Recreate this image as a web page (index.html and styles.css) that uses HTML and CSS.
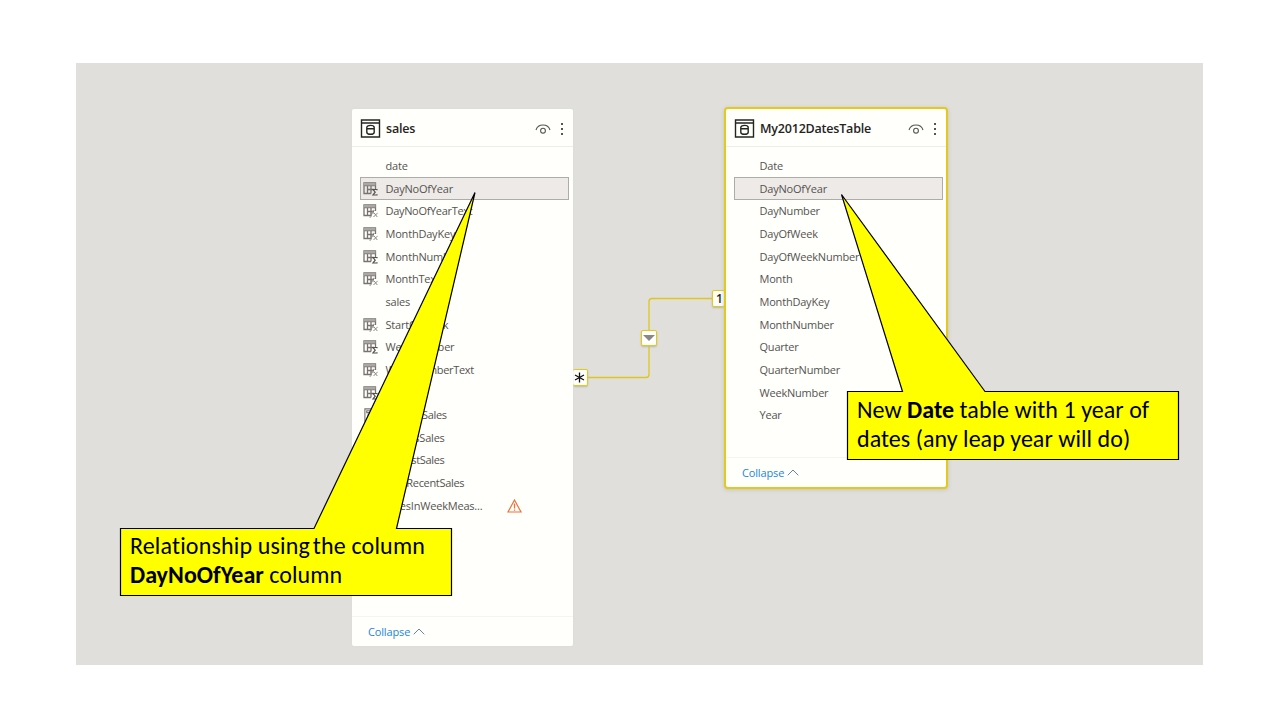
FILE: index.html
```
<!DOCTYPE html>
<html lang="en">
<head>
<meta charset="utf-8">
<title>Model view</title>
<link rel="stylesheet" href="styles.css">
</head>
<body>
<svg class="defs" width="0" height="0" aria-hidden="true">
  <symbol id="table" viewBox="0 0 20 19">
    <path d="M1 1h18v17H1zM1 4h18" fill="none" stroke="#252423" stroke-width="1.4"/>
    <path d="M6.300 8.500v4.700c0 2.800 7.400 2.800 7.400 0V8.500c0-2.800-7.400-2.800-7.400 0zM6.500 9.800h7" fill="none" stroke="#252423" stroke-width="1.400"/>
  </symbol>
  <symbol id="eye" viewBox="0 0 16 10">
    <path d="M1 6C3 -.7 13 -.7 15 6" fill="none" stroke="#555" stroke-width="1.100"/>
    <circle cx="8" cy="6.700" r="2.400" fill="none" stroke="#555" stroke-width="1.100"/>
  </symbol>
  <symbol id="grid" viewBox="0 0 15 14">
    <path d="M8 11.500H1V1h11.500v6M1 3.500h11.500M4.500 3.500v8M8 3.500v8M4.500 7.500H11" fill="none" stroke="#77736f" stroke-width="1.300"/>
    <path d="M1 1h11.500v2.500H1z" fill="#aaa7a4"/>
  </symbol>
  <symbol id="sum" viewBox="0 0 15 14">
    <use href="#grid" width="15" height="14"/>
    <path d="M14 8.300v-.8H10l2.200 2.700L10 13h4v-.8" fill="none" stroke="#55514e" stroke-width="1.200"/>
  </symbol>
  <symbol id="fx" viewBox="0 0 15 14">
    <use href="#grid" width="15" height="14"/>
    <path d="M11.500 6.500c-2-.7-2.300 1-2.800 3.700s-.8 3.300-2.200 3M7.500 9h3.500M11 8.800l3.300 4.200M14.700 8.800L10.500 13" fill="none" stroke="#8b8784"/>
  </symbol>
  <symbol id="calc" viewBox="0 0 15 15">
    <path d="M1.500 1h11v13h-11zM3.500 3h7v2h-7zM4 7.500h2m2 0h2M4 10h2m2 0h2M4 12h2" fill="none" stroke="#77736f" stroke-width="1.200"/>
  </symbol>
</svg>
<main class="canvas">
  <svg class="links" width="150" height="90" viewBox="573 293 150 90">
    <path d="M573 377.500h73q3 0 3-3v-73q0-3 3-3h73" fill="none" stroke="#dfc51f" stroke-width="1.300"/>
  </svg>
  <span class="end many"><svg width="11" height="11" viewBox="0 0 11 11"><path d="M5.500 .5v10M1 3l9 5M10 3L1 8" stroke="#111" stroke-width="1.300"/></svg></span>
  <span class="end filter"><svg width="12" height="6" viewBox="0 0 12 6"><path d="M0 0h12L6 6z" fill="#8a8886"/></svg></span>
  <span class="end one">1</span>

  <section class="entity sales">
    <header class="head"><svg class="ticon"><use href="#table"/></svg><h2 class="title">sales</h2><svg class="eye"><use href="#eye"/></svg><span class="dots"><i></i><i></i><i></i></span></header>
    <ul class="fields">
      <li class="field"><span class="slot"></span>date</li>
      <li class="field picked"><svg class="slot"><use href="#sum"/></svg>DayNoOfYear</li>
      <li class="field"><svg class="slot"><use href="#fx"/></svg><span class="tight">DayNoOfYearText</span></li>
      <li class="field"><svg class="slot"><use href="#fx"/></svg>MonthDayKey</li>
      <li class="field"><svg class="slot"><use href="#sum"/></svg>MonthNumber</li>
      <li class="field"><svg class="slot"><use href="#fx"/></svg>MonthText</li>
      <li class="field"><span class="slot"></span>sales</li>
      <li class="field"><svg class="slot"><use href="#fx"/></svg>StartOfWeek</li>
      <li class="field"><svg class="slot"><use href="#sum"/></svg>WeekNumber</li>
      <li class="field"><svg class="slot"><use href="#fx"/></svg><span class="tight">WeekNumberText</span></li>
      <li class="field"><svg class="slot"><use href="#sum"/></svg>Year</li>
      <li class="field"><svg class="slot"><use href="#calc"/></svg><span class="tight">MedianSales</span></li>
      <li class="field"><svg class="slot"><use href="#calc"/></svg>HighesSales</li>
      <li class="field"><svg class="slot"><use href="#calc"/></svg><span class="tight">LowestSales</span></li>
      <li class="field"><svg class="slot"><use href="#calc"/></svg><span class="tight">MaxRecentSales</span></li>
      <li class="field"><svg class="slot"><use href="#calc"/></svg>SalesInWeekMeas...<svg class="warn" viewBox="0 0 15 14"><path d="M7.500 1L14 13H1z" fill="none" stroke="#f0703a" stroke-width="1.200"/><path d="M7.500 4.500v5m0 1v1.300" stroke="#f0703a" stroke-width="1.300"/></svg></li>
    </ul>
    <footer class="foot">Collapse<svg class="chev" viewBox="0 0 12 7"><path d="M.7 6.300L6 1l5.300 5.300" fill="none" stroke="#6c7fae"/></svg></footer>
  </section>

  <section class="entity dates">
    <header class="head"><svg class="ticon"><use href="#table"/></svg><h2 class="title">My2012DatesTable</h2><svg class="eye"><use href="#eye"/></svg><span class="dots"><i></i><i></i><i></i></span></header>
    <ul class="fields">
      <li class="field"><span class="slot"></span>Date</li>
      <li class="field picked"><span class="slot"></span>DayNoOfYear</li>
      <li class="field"><span class="slot"></span>DayNumber</li>
      <li class="field"><span class="slot"></span>DayOfWeek</li>
      <li class="field"><span class="slot"></span>DayOfWeekNumber</li>
      <li class="field"><span class="slot"></span>Month</li>
      <li class="field"><span class="slot"></span>MonthDayKey</li>
      <li class="field"><span class="slot"></span>MonthNumber</li>
      <li class="field"><span class="slot"></span>Quarter</li>
      <li class="field"><span class="slot"></span>QuarterNumber</li>
      <li class="field"><span class="slot"></span>WeekNumber</li>
      <li class="field"><span class="slot"></span>Year</li>
    </ul>
    <footer class="foot">Collapse<svg class="chev" viewBox="0 0 12 7"><path d="M.7 6.300L6 1l5.300 5.300" fill="none" stroke="#6c7fae"/></svg></footer>
  </section>
</main>

<svg class="bubbles" width="1280" height="720" viewBox="0 0 1280 720">
  <path d="M120.500 528.500H314L475 192.500L396.500 528.500H451.500V595.500H120.500z"/>
  <path d="M847.500 391.500H902.500L841.500 194.500L985 391.500H1178.500V459.500H847.500z"/>
</svg>
<p class="note note-link"><span class="wide">Relationship using<span class="thin"> </span>the column</span><br><b>DayNoOfYear</b> column</p>
<p class="note note-date">New <b>Date</b> table with 1 year of<br>dates (any leap year will do)</p>
</body>
</html>
```
FILE: styles.css
```
* { box-sizing: border-box; }
body { margin: 0; width: 1280px; height: 720px; overflow: hidden; background: #fff; padding: 63px 77px 55px 76px; }
.defs, .links, .bubbles { position: absolute; }
.canvas { height: 602px; background: #e0dfdb; font: 11px/22px "Open Sans", "Noto Sans", sans-serif; color: #55534f; }
.links { left: 573px; top: 293px; }
.entity { position: absolute; display: flex; flex-direction: column; background: #fffffc; border-radius: 2px; }
.sales { left: 352px; top: 109px; width: 221px; height: 537px; box-shadow: 0 0 2px #d8d7d3; }
.dates { left: 724px; top: 107px; width: 224px; height: 382px; border: 2px solid #e2c920; border-radius: 4px; box-shadow: 0 1px 4px #c5c4bd; }
.head { display: flex; align-items: center; height: 38px; padding: 2px 8px 0 8px; border-bottom: 1px solid #eeedeb; flex: none; }
.ticon { width: 21px; height: 19px; }
.title { margin: 0 auto 0 5px; font-size: 12.5px; font-weight: 600; color: #252423; letter-spacing: -.2px; }
.eye { width: 16px; height: 10px; margin-right: 10px; }
.dots { display: flex; flex-direction: column; gap: 3px; width: 2px; margin-right: 2px; }
.dots i { width: 2px; height: 2px; background: #555; }
.fields { list-style: none; margin: 0; padding: 7.800px 4px 0 8px; flex: 1; }
.field { display: flex; align-items: center; height: 22.65px; padding-left: 3px; letter-spacing: -.2px; white-space: nowrap; }
.tight { letter-spacing: -.32px; }
.picked { background: #edeae8; box-shadow: inset 0 0 0 1px #aeaba8; }
.dates .fields { padding-right: 3px; }
.slot { width: 15px; height: 14px; margin-right: 7.500px; flex: none; }
.warn { width: 15px; height: 14px; margin-left: 25px; }
.foot { display: flex; align-items: center; gap: 3px; height: 30px; padding-left: 16px; border-top: 1px solid #f4f4f1; color: #1c86dc; letter-spacing: -.15px; }
.chev { width: 12px; height: 7px; }
.end { position: absolute; display: flex; align-items: center; justify-content: center; width: 17px; height: 17px; background: #fffffc; border: 1.500px solid #e2c920; border-radius: 2px; box-shadow: 0 1px 2px #bbb8a8; color: #222; font-weight: 600; font-size: 12px; }
.many { left: 573px; top: 369px; width: 15px; border-left: 0; padding-right: 1px; }
.filter { left: 641px; top: 330px; width: 16px; height: 16px; }
.one { left: 712px; top: 290px; width: 13px; padding-left: 2px; }
.bubbles { left: 0; top: 0; fill: #ff0; stroke: #000; stroke-width: 1.200; }
.note { position: absolute; margin: 0; font: 24px/29px Carlito, Lato, sans-serif; font-variant-ligatures: none; color: #000; white-space: nowrap; letter-spacing: .04px; }
.note-link { left: 130px; top: 531px; }
.note-date { left: 857px; top: 395px; }
.wide { letter-spacing: .16px; }
.thin { font-size: 12px; line-height: 0; }
```
